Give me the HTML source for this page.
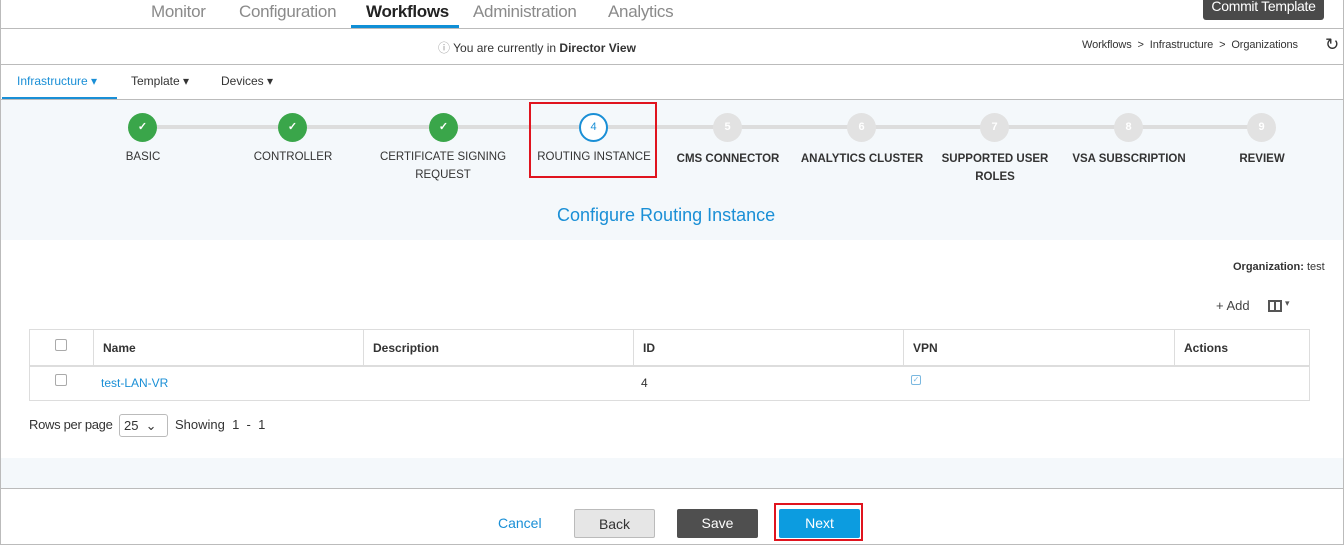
<!DOCTYPE html><html><head><style>
*{box-sizing:border-box;margin:0;padding:0}
body{width:1344px;height:545px;position:relative;font-family:"Liberation Sans",sans-serif;background:#fff;overflow:hidden;color:#333}
.a{position:absolute;white-space:nowrap}
.nav{font-size:17px;color:#8a8a8a;top:2px;letter-spacing:-0.3px}
.st{position:absolute;top:113px;width:29px;height:29px;border-radius:50%;text-align:center;line-height:29px;font-size:11px;font-weight:bold;color:#fff}
.lb{position:absolute;font-size:11.5px;font-weight:bold;color:#333;text-align:center;width:160px;line-height:18px}
.th{font-size:12px;font-weight:bold;top:341px}
.cb{position:absolute;width:12px;height:12px;border:1px solid #aaa;border-radius:2px;background:#fff}
.btn{position:absolute;top:509px;height:29px;line-height:29px;text-align:center;font-size:14px;border-radius:2px}
</style></head><body>
<div class="a" style="left:0;top:0;width:1344px;height:545px;border:1px solid #bbb;border-top:none"></div>
<div class="a nav" style="left:151px">Monitor</div>
<div class="a nav" style="left:239px">Configuration</div>
<div class="a nav" style="left:366px;color:#222;font-weight:bold">Workflows</div>
<div class="a" style="left:351px;top:25px;width:108px;height:3px;background:#0f8fd6"></div>
<div class="a nav" style="left:473px">Administration</div>
<div class="a nav" style="left:608px">Analytics</div>
<div class="a" style="left:1203px;top:-4px;width:121px;height:24px;background:#4a4a4a;color:#fff;border-radius:3px;font-size:14px;text-align:center;line-height:20px;letter-spacing:-0.3px">Commit Template</div>
<div class="a" style="left:0;top:28px;width:1344px;height:1px;background:#bbb"></div>
<div class="a" style="left:438px;top:39px;font-size:12px;color:#333"><span style="color:#999">ⓘ</span> You are currently in <b>Director View</b></div>
<div class="a" style="left:1082px;top:39px;font-size:11px;color:#333;letter-spacing:-0.1px">Workflows &nbsp;&gt;&nbsp; Infrastructure &nbsp;&gt;&nbsp; Organizations</div>
<div class="a" style="left:1325px;top:35px;font-size:17px;color:#333">↻</div>
<div class="a" style="left:0;top:64px;width:1344px;height:1px;background:#bbb"></div>
<div class="a" style="left:17px;top:74px;font-size:12px;color:#1a8fd6">Infrastructure ▾</div>
<div class="a" style="left:2px;top:97px;width:115px;height:2px;background:#1a8fd6"></div>
<div class="a" style="left:131px;top:74px;font-size:12px">Template ▾</div>
<div class="a" style="left:221px;top:74px;font-size:12px">Devices ▾</div>
<div class="a" style="left:1px;top:99px;width:1342px;height:1px;background:#bbb"></div>
<div class="a" style="left:1px;top:100px;width:1342px;height:140px;background:#f4f8fb"></div>
<div class="a" style="left:143px;top:125px;width:1119px;height:4px;background:#ddd"></div>
<div class="st" style="left:128px;background:#3aa64a">✓</div>
<div class="st" style="left:278px;background:#3aa64a">✓</div>
<div class="st" style="left:429px;background:#3aa64a">✓</div>
<div class="st" style="left:579px;background:#fff;border:2px solid #1a8fd6;color:#1a8fd6;line-height:25px;font-weight:normal">4</div>
<div class="st" style="left:713px;background:#e2e2e2">5</div>
<div class="st" style="left:847px;background:#e2e2e2">6</div>
<div class="st" style="left:980px;background:#e2e2e2">7</div>
<div class="st" style="left:1114px;background:#e2e2e2">8</div>
<div class="st" style="left:1247px;background:#e2e2e2">9</div>
<div class="lb" style="left:63px;top:148px;font-weight:normal">BASIC</div>
<div class="lb" style="left:213px;top:148px;font-weight:normal">CONTROLLER</div>
<div class="lb" style="left:363px;top:148px;font-weight:normal">CERTIFICATE SIGNING<br>REQUEST</div>
<div class="lb" style="left:514px;top:148px;font-weight:normal">ROUTING INSTANCE</div>
<div class="a" style="left:529px;top:102px;width:128px;height:76px;border:2px solid #e0141e"></div>
<div class="lb" style="left:648px;top:150px">CMS CONNECTOR</div>
<div class="lb" style="left:782px;top:150px">ANALYTICS CLUSTER</div>
<div class="lb" style="left:915px;top:150px">SUPPORTED USER<br>ROLES</div>
<div class="lb" style="left:1049px;top:150px">VSA SUBSCRIPTION</div>
<div class="lb" style="left:1182px;top:150px">REVIEW</div>
<div class="a" style="left:557px;top:205px;font-size:18px;color:#1a8fd6">Configure Routing Instance</div>
<div class="a" style="left:1233px;top:261px;font-size:11px;color:#333"><b>Organization:</b> test</div>
<div class="a" style="left:1216px;top:298px;font-size:13px;color:#444">+ Add</div>
<div class="a" style="left:1268px;top:300px;width:14px;height:12px;border:2px solid #555"></div><div class="a" style="left:1274px;top:300px;width:2px;height:12px;background:#555"></div>
<div class="a" style="left:1285px;top:298px;font-size:9px;color:#555">▾</div>
<div class="a" style="left:29px;top:329px;width:1281px;height:72px;border:1px solid #ddd"></div>
<div class="a" style="left:29px;top:365px;width:1281px;height:2px;background:#ddd"></div>
<div class="a" style="left:93px;top:329px;width:1px;height:36px;background:#ddd"></div>
<div class="a" style="left:363px;top:329px;width:1px;height:36px;background:#ddd"></div>
<div class="a" style="left:633px;top:329px;width:1px;height:36px;background:#ddd"></div>
<div class="a" style="left:903px;top:329px;width:1px;height:36px;background:#ddd"></div>
<div class="a" style="left:1174px;top:329px;width:1px;height:36px;background:#ddd"></div>
<div class="cb" style="left:55px;top:339px"></div>
<div class="a th" style="left:103px">Name</div>
<div class="a th" style="left:373px">Description</div>
<div class="a th" style="left:643px">ID</div>
<div class="a th" style="left:913px">VPN</div>
<div class="a th" style="left:1184px">Actions</div>
<div class="cb" style="left:55px;top:374px"></div>
<div class="a" style="left:101px;top:376px;font-size:12px;color:#1a8fd6">test-LAN-VR</div>
<div class="a" style="left:641px;top:376px;font-size:12px">4</div>
<div class="a" style="left:911px;top:375px;width:10px;height:10px;border:1px solid #7ab8e0;border-radius:2px;font-size:8px;color:#7ab8e0;line-height:8px;text-align:center">✓</div>
<div class="a" style="left:29px;top:417px;font-size:13px;letter-spacing:-0.3px">Rows per page</div>
<div class="a" style="left:119px;top:414px;width:49px;height:23px;border:1px solid #bbb;border-radius:3px;font-size:13px;padding:3px 0 0 4px">25 &nbsp;⌄</div>
<div class="a" style="left:175px;top:417px;font-size:13px">Showing &nbsp;1 &nbsp;- &nbsp;1</div>
<div class="a" style="left:1px;top:458px;width:1342px;height:30px;background:#f4f8fb"></div>
<div class="a" style="left:0;top:488px;width:1344px;height:1px;background:#bbb"></div>
<div class="a" style="left:498px;top:515px;font-size:14px;color:#1a8fd6">Cancel</div>
<div class="btn" style="left:574px;width:81px;background:#e6e6e6;border:1px solid #bbb;color:#333">Back</div>
<div class="btn" style="left:677px;width:81px;background:#4f4f4f;color:#fff">Save</div>
<div class="btn" style="left:779px;width:81px;background:#0c9ce0;color:#fff">Next</div>
<div class="a" style="left:774px;top:503px;width:89px;height:38px;border:2px solid #e0141e"></div>
</body></html>
